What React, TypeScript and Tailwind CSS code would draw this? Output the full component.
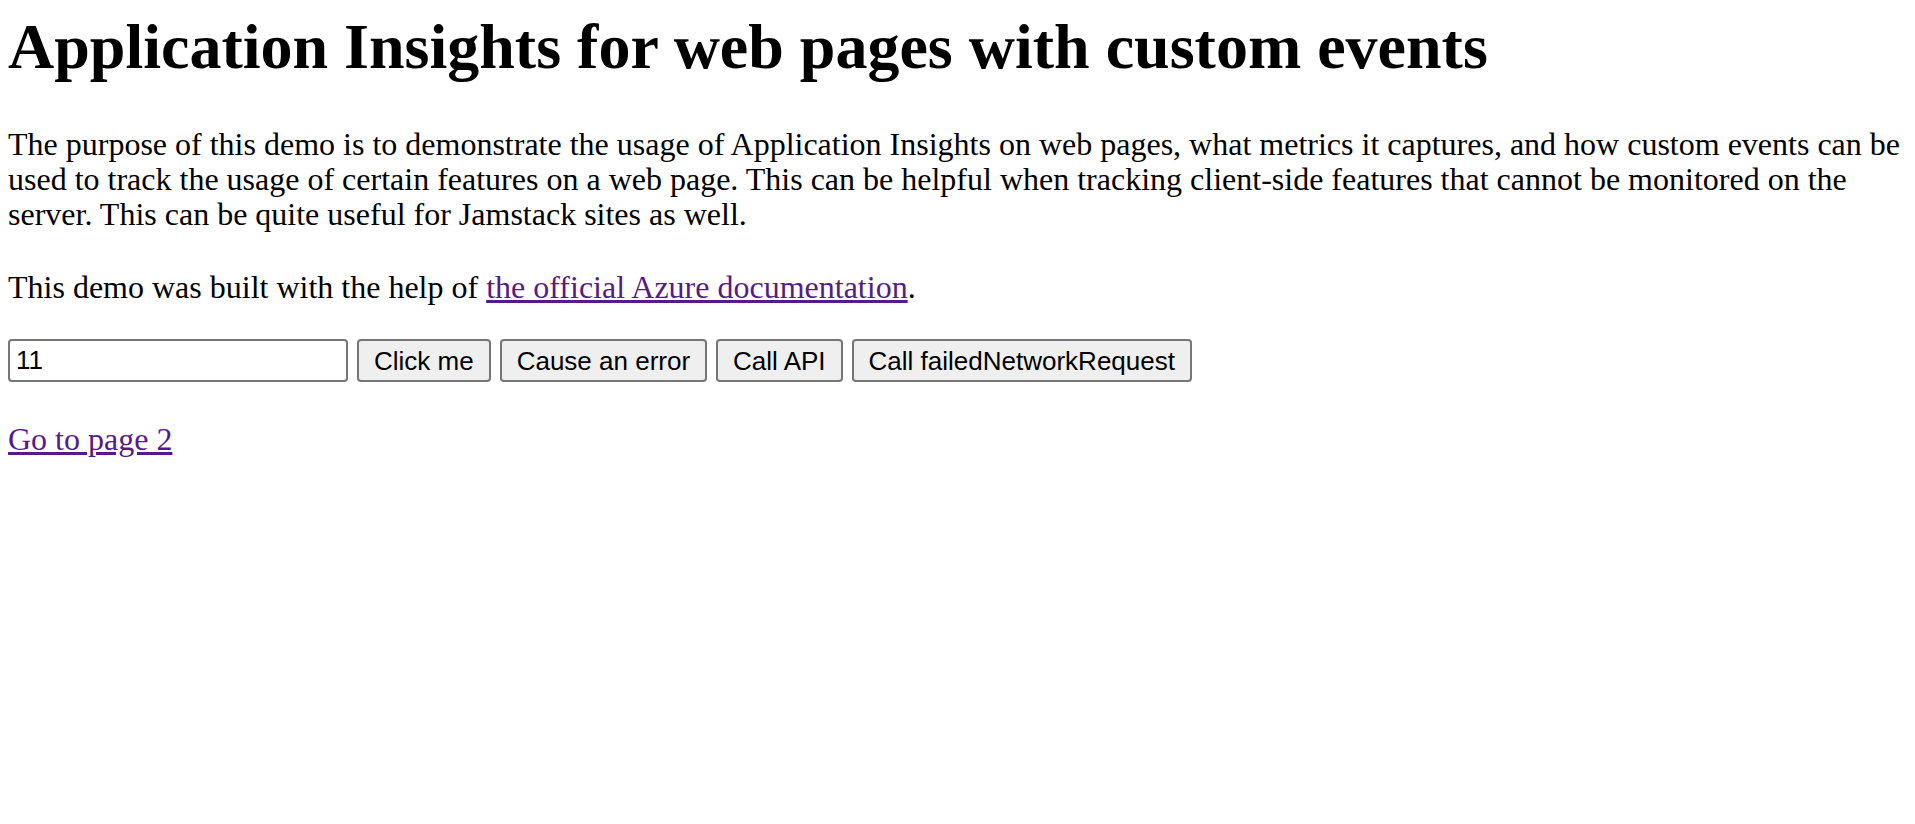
import React from 'react';

function App() {
  const buttons = ['Click me', 'Cause an error', 'Call API', 'Call failedNetworkRequest'];

  return (
    <div className="min-h-screen bg-white p-2 text-black font-['Liberation_Serif','Times_New_Roman',serif]">
      <h1 className="mt-[4px] text-[64px] leading-[69px] font-bold">
        Application Insights for web pages with custom events
      </h1>

      <p className="mt-[46px] text-[32px] leading-[35px]">
        The purpose of this demo is to demonstrate the usage of Application Insights on web pages, what metrics it
        captures, and how custom events can be used to track the usage of certain features on a web page. This can be
        helpful when tracking client-side features that cannot be monitored on the server. This can be quite useful for
        Jamstack sites as well.
      </p>

      <p className="mt-[38px] text-[32px] leading-[35px]">
        This demo was built with the help of{' '}
        <a href="#" className="text-[#551a8b] underline">
          the official Azure documentation
        </a>
        .
      </p>

      {/* Controls */}
      <div className="mt-[34px] flex items-center gap-[9px] font-['Liberation_Sans',Arial,sans-serif] text-[26px]">
        <input
          type="text"
          defaultValue="11"
          className="h-[43px] w-[340px] rounded-[4px] border-2 border-[#767676] bg-white px-[6px] text-black outline-none"
        />
        {buttons.map((label) => (
          <button
            key={label}
            className="h-[43px] rounded-[4px] border-2 border-[#767676] bg-[#efefef] px-[15px] leading-none text-black"
          >
            {label}
          </button>
        ))}
      </div>

      <p className="mt-[40px] text-[32px] leading-[35px]">
        <a href="#" className="text-[#551a8b] underline">
          Go to page 2
        </a>
      </p>
    </div>
  );
}

export default App;
